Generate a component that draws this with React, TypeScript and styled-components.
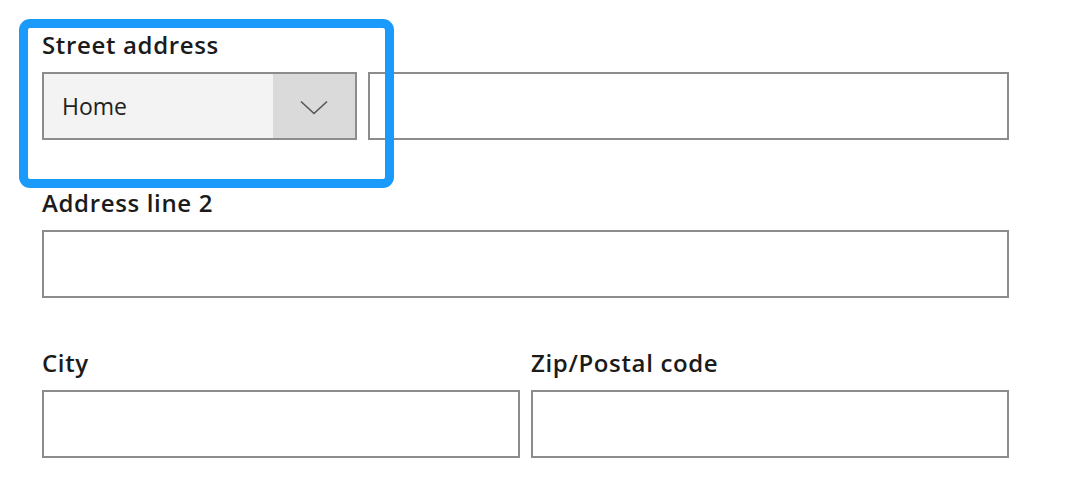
import React from "react";
import styled, { createGlobalStyle } from "styled-components";

const Global = createGlobalStyle`
  html, body { margin: 0; padding: 0; background: #ffffff; }
  body { font-family: "Open Sans", "Noto Sans", sans-serif; color: #1b1b1b; }
`;

const Page = styled.div`
  position: relative;
  width: 1080px;
  height: 485px;
  overflow: hidden;
  box-sizing: border-box;
  padding: 29px 0 0 42px;
`;

const Form = styled.form`
  width: 967px;
  display: flex;
  flex-direction: column;
  gap: 47px;
`;

const Row = styled.div<{ $cols: string; $offset?: number }>`
  display: grid;
  grid-template-columns: ${(p) => p.$cols};
  column-gap: 11px;
  margin-top: ${(p) => p.$offset ?? 0}px;
`;

const Field = styled.div`
  display: flex;
  flex-direction: column;
  min-width: 0;
`;

const Label = styled.label`
  font-size: 24px;
  font-weight: 600;
  letter-spacing: 0.65px;
  line-height: 32px;
  height: 32px;
  margin-bottom: 11px;
  color: #1b1b1b;
  white-space: nowrap;
`;

const Input = styled.div`
  box-sizing: border-box;
  height: 68px;
  border: 2px solid #8c8c8c;
  background: #ffffff;
`;

const Select = styled.div`
  box-sizing: border-box;
  height: 68px;
  border: 2px solid #8c8c8c;
  background: #f3f3f3;
  display: flex;
  align-items: stretch;
`;

const SelectValue = styled.span`
  flex: 1;
  display: flex;
  align-items: center;
  padding-left: 18px;
  font-size: 23px;
  font-weight: 400;
  color: #222;
`;

const Chevron = styled.span`
  width: 82px;
  background: #dadada;
  display: flex;
  align-items: center;
  justify-content: center;
  padding-top: 2px;
  box-sizing: border-box;
`;

const Highlight = styled.div`
  position: absolute;
  left: 19px;
  top: 19px;
  width: 375px;
  height: 169px;
  box-sizing: border-box;
  border: 9px solid #1a9afa;
  border-radius: 11px;
  pointer-events: none;
`;

export default function App() {
  return (
    <Page>
      <Global />
      <Form>
        <Field>
          <Label>Street address</Label>
          <Row $cols="315px 1fr">
            <Select>
              <SelectValue>Home</SelectValue>
              <Chevron>
                <svg width="28" height="15" viewBox="0 0 28 15" fill="none">
                  <path d="M1 1.5 L14 13.5 L27 1.5" stroke="#555" strokeWidth="1.6" />
                </svg>
              </Chevron>
            </Select>
            <Input />
          </Row>
        </Field>
        <Field>
          <Label>Address line 2</Label>
          <Input />
        </Field>
        <Row $cols="1fr 1fr" $offset={2}>
          <Field>
            <Label>City</Label>
            <Input />
          </Field>
          <Field>
            <Label>Zip/Postal code</Label>
            <Input />
          </Field>
        </Row>
      </Form>
      <Highlight />
    </Page>
  );
}
